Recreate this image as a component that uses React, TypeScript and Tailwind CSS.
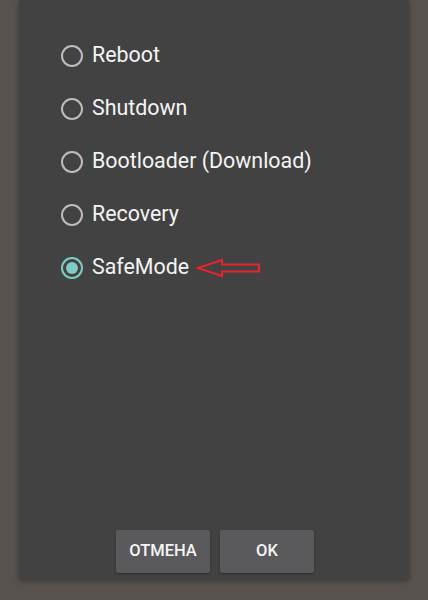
import React, { useState } from 'react';

const options = ['Reboot', 'Shutdown', 'Bootloader (Download)', 'Recovery', 'SafeMode'];

const Radio: React.FC<{ checked: boolean }> = ({ checked }) => (
  <span
    className={`flex h-[22px] w-[22px] shrink-0 items-center justify-center rounded-full border-2 ${
      checked ? 'border-[#80cbc4]' : 'border-[#bdbdbd]'
    }`}
  >
    {checked && <span className="h-[12px] w-[12px] rounded-full bg-[#80cbc4]" />}
  </span>
);

const Arrow: React.FC = () => (
  <svg width="66" height="20" viewBox="0 0 66 20" className="ml-[7px]">
    <path
      d="M2 10 L26 2 L26 6.5 L63 6.5 L63 13.5 L26 13.5 L26 18 Z"
      fill="none"
      stroke="#e3262e"
      strokeWidth="2.2"
      strokeLinejoin="miter"
    />
  </svg>
);

const App: React.FC = () => {
  const [selected, setSelected] = useState('SafeMode');

  return (
    <div className="flex h-[600px] w-[428px] justify-center bg-[#58534f] font-['Roboto',sans-serif]">
      <div className="flex h-[579px] w-[390px] flex-col bg-[#424242] shadow-[0_2px_6px_rgba(0,0,0,0.35)]">
        <div className="flex flex-col pt-[29px] pl-[42px]">
          {options.map((opt) => (
            <button
              key={opt}
              onClick={() => setSelected(opt)}
              className="flex h-[53px] items-center text-left"
            >
              <Radio checked={selected === opt} />
              <span className="ml-[9px] text-[21.4px] text-[#f4f4f4]">{opt}</span>
              {opt === 'SafeMode' && <Arrow />}
            </button>
          ))}
        </div>
        <div className="mt-auto flex justify-center gap-[10px] pb-[6px] pl-[2px]">
          <button className="h-[43px] w-[94px] rounded-[2px] bg-[#5a5a5c] text-[16.5px] font-medium text-[#f5f5f5] shadow-[0_1px_2px_rgba(0,0,0,0.4)]">
            ОТМЕНА
          </button>
          <button className="h-[43px] w-[94px] rounded-[2px] bg-[#5a5a5c] text-[16.5px] font-medium text-[#f5f5f5] shadow-[0_1px_2px_rgba(0,0,0,0.4)]">
            OK
          </button>
        </div>
      </div>
    </div>
  );
};

export default App;
